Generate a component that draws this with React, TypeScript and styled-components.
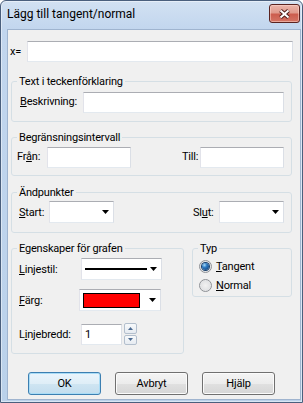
import React from "react";
import styled, { createGlobalStyle } from "styled-components";

const GlobalStyle = createGlobalStyle`
  html, body {
    margin: 0;
    padding: 0;
    background: #ffffff;
  }
  * {
    box-sizing: border-box;
  }
  body {
    font-family: Roboto, "Liberation Sans", sans-serif;
    font-size: 11px;
    letter-spacing: -0.2px;
    color: #000;
  }
`;

/* window chrome */
const Window = styled.div`
  width: 303px;
  height: 403px;
  display: flex;
  flex-direction: column;
  border: 1px solid #4a5f7d;
  border-radius: 6px 6px 0 0;
  background: linear-gradient(180deg, #d2e1f2 0px, #c2d6ee 28px, #bad1ea 100%);
  box-shadow: inset 0 0 0 1px rgba(255, 255, 255, 0.45);
  overflow: hidden;
`;

const TitleBar = styled.div`
  height: 28px;
  flex-shrink: 0;
  display: flex;
  align-items: flex-start;
  justify-content: space-between;
  padding: 0 2px 0 6px;
`;

const Caption = styled.span`
  font-size: 12px;
  letter-spacing: 0;
  line-height: 15px;
  margin-top: 6px;
  color: #000;
`;

const CloseButton = styled.div`
  width: 31px;
  height: 19px;
  margin-top: 3px;
  border: 1px solid #5a2320;
  border-radius: 3px;
  display: flex;
  align-items: center;
  justify-content: center;
  background: linear-gradient(
    180deg,
    #ebb5ab 0%,
    #e09a8c 45%,
    #cc5d4e 55%,
    #d47464 100%
  );
  box-shadow: inset 0 0 0 1px rgba(255, 220, 210, 0.5);
`;

const Client = styled.div`
  flex: 1;
  margin: 0 1px 2px 6px;
  border: 1px solid #9fb4cf;
  background: #f0f0f0;
  display: flex;
  flex-direction: column;
  padding-top: 11px;
`;

/* form parts */
const Row = styled.div<{ $mt?: number }>`
  display: flex;
  align-items: center;
  margin-top: ${(p) => p.$mt || 0}px;
`;

const XRow = styled(Row)`
  padding-left: 2px;
`;

const Label = styled.span<{ $w: number; $raise?: number }>`
  width: ${(p) => p.$w}px;
  flex-shrink: 0;
  white-space: nowrap;
  line-height: 13px;
  margin-bottom: ${(p) => (p.$raise || 0) * 2}px;
`;

const RightLabel = styled(Label)`
  margin-left: auto;
`;

const TextBox = styled.input<{ $w: number }>`
  width: ${(p) => p.$w}px;
  height: 21px;
  flex-shrink: 0;
  margin: 0;
  padding: 0 3px;
  font: inherit;
  letter-spacing: inherit;
  background: #fff;
  border: 1px solid;
  border-color: #abadb3 #dbdfe6 #e3e9ef #e2e3ea;
  border-radius: 0;
  outline: none;
`;

const Combo = styled.div<{ $w: number }>`
  width: ${(p) => p.$w}px;
  height: 22px;
  flex-shrink: 0;
  display: flex;
  align-items: center;
  padding: 0 4px 0 1px;
  background: #fff;
  border: 1px solid;
  border-color: #abadb3 #dbdfe6 #e3e9ef #e2e3ea;
`;

const ComboArrow = styled.svg`
  margin-left: auto;
  flex-shrink: 0;
`;

const LineSample = styled.div`
  margin-left: 2px;
  width: 62px;
  height: 2px;
  background: #000;
`;

const ColorSwatch = styled.div<{ $color: string }>`
  margin-left: 2px;
  width: 57px;
  height: 15px;
  border: 1px solid #000;
  background: ${(p) => p.$color};
`;

const Spinner = styled.div`
  margin-left: 2px;
  width: 13px;
  height: 22px;
  display: flex;
  flex-direction: column;
  gap: 1px;
`;

const SpinHalf = styled.div`
  flex: 1;
  display: flex;
  align-items: center;
  justify-content: center;
  border: 1px solid #b3bfcd;
  border-radius: 2px;
  background: linear-gradient(180deg, #f7f9fb 0%, #e6ebf1 100%);
`;

const Group = styled.fieldset<{ $w: number; $mt?: number }>`
  width: ${(p) => p.$w}px;
  min-width: 0;
  margin: ${(p) => p.$mt || 0}px 0 0 0;
  padding: 0;
  border: 1px solid #d5dfe5;
  border-radius: 3px;
  flex-shrink: 0;
`;

const MainGroup = styled(Group)`
  margin-left: 3px;
`;

const Legend = styled.legend`
  margin-left: 5px;
  padding: 0 2px;
  line-height: 15px;
  font-size: 11px;
`;

const GroupBody = styled.div<{ $pad: string }>`
  padding: ${(p) => p.$pad};
`;

const BottomRow = styled.div`
  display: flex;
  align-items: flex-start;
  gap: 8px;
  margin: 8px 0 0 3px;
`;

const RadioRow = styled.div<{ $mt?: number }>`
  display: flex;
  align-items: center;
  gap: 4px;
  height: 17px;
  margin-top: ${(p) => p.$mt || 0}px;
`;

const Radio = styled.span<{ $checked?: boolean }>`
  width: 13px;
  height: 13px;
  flex-shrink: 0;
  border-radius: 50%;
  border: 1px solid #8e9196;
  display: flex;
  align-items: center;
  justify-content: center;
  background: radial-gradient(circle at 50% 50%, #f2f2f2 0%, #e2e3e5 60%, #fbfbfb 100%);

  &::after {
    content: "";
    width: 7px;
    height: 7px;
    border-radius: 50%;
    display: ${(p) => (p.$checked ? "block" : "none")};
    background: radial-gradient(
      circle at 35% 30%,
      #a9dcfa 0%,
      #2f7cc4 35%,
      #0b346a 100%
    );
    box-shadow: 0 0 0 1px #173f6c;
  }
`;

const ButtonRow = styled.div`
  display: flex;
  gap: 14px;
  margin-top: 18px;
  padding-left: 20px;
`;

const Button = styled.button<{ $default?: boolean }>`
  width: 73px;
  height: 23px;
  margin: 0;
  padding: 0;
  font: inherit;
  letter-spacing: inherit;
  color: #000;
  border-radius: 3px;
  border: 1px solid ${(p) => (p.$default ? "#3c7fb1" : "#707070")};
  background: ${(p) =>
    p.$default
      ? "linear-gradient(180deg, #eaf5fc 0%, #dfeef7 50%, #cfe5f2 51%, #c3ddee 100%)"
      : "linear-gradient(180deg, #f4f4f4 0%, #ececec 50%, #e0e0e0 51%, #d6d6d6 100%)"};
  box-shadow: inset 0 0 0 1px ${(p) => (p.$default ? "#a9dcf6" : "#fbfbfb")};
`;

function Arrow() {
  return (
    <ComboArrow width="7" height="4" viewBox="0 0 7 4">
      <polygon points="0,0 7,0 3.5,4" fill="#000" />
    </ComboArrow>
  );
}

function SpinArrow({ up }: { up?: boolean }) {
  return (
    <svg width="5" height="3" viewBox="0 0 5 3">
      <polygon points={up ? "0,3 5,3 2.5,0" : "0,0 5,0 2.5,3"} fill="#4b6a91" />
    </svg>
  );
}

export default function App() {
  return (
    <>
      <GlobalStyle />
      <Window>
        <TitleBar>
          <Caption>Lägg till tangent/normal</Caption>
          <CloseButton>
            <svg width="13" height="10" viewBox="0 0 13 10">
              <path d="M2.5 1.5 L10.5 8.5 M10.5 1.5 L2.5 8.5" stroke="#4d1f1b" strokeWidth="4" />
              <path d="M2.5 1.5 L10.5 8.5 M10.5 1.5 L2.5 8.5" stroke="#ffffff" strokeWidth="2" />
            </svg>
          </CloseButton>
        </TitleBar>

        <Client>
          <XRow>
            <Label $w={17}>x=</Label>
            <TextBox $w={266} />
          </XRow>

          <MainGroup $w={281} $mt={12}>
            <Legend>Text i teckenförklaring</Legend>
            <GroupBody $pad="3px 7px 8px 8px">
              <Row>
                <Label $w={63} $raise={1}>
                  <u>B</u>eskrivning:
                </Label>
                <TextBox $w={201} />
              </Row>
            </GroupBody>
          </MainGroup>

          <MainGroup $w={281} $mt={8}>
            <Legend>Begränsningsintervall</Legend>
            <GroupBody $pad="2px 7px 7px 5px">
              <Row>
                <Label $w={30} $raise={1}>
                  Fr<u>å</u>n:
                </Label>
                <TextBox $w={84} />
                <RightLabel $w={18} $raise={1}>
                  Till:
                </RightLabel>
                <TextBox $w={84} />
              </Row>
            </GroupBody>
          </MainGroup>

          <MainGroup $w={281} $mt={9}>
            <Legend>Ändpunkter</Legend>
            <GroupBody $pad="1px 7px 9px 7px">
              <Row>
                <Label $w={30}>
                  <u>S</u>tart:
                </Label>
                <Combo $w={65}>
                  <Arrow />
                </Combo>
                <RightLabel $w={26}>
                  Sl<u>u</u>t:
                </RightLabel>
                <Combo $w={65}>
                  <Arrow />
                </Combo>
              </Row>
            </GroupBody>
          </MainGroup>

          <BottomRow>
            <Group $w={173}>
              <Legend>Egenskaper för grafen</Legend>
              <GroupBody $pad="2px 0 8px 7px">
                <Row>
                  <Label $w={62}>
                    <u>L</u>injestil:
                  </Label>
                  <Combo $w={81}>
                    <LineSample />
                    <Arrow />
                  </Combo>
                </Row>
                <Row $mt={9}>
                  <Label $w={60}>
                    <u>F</u>ärg:
                  </Label>
                  <Combo $w={82}>
                    <ColorSwatch $color="#ff0000" />
                    <Arrow />
                  </Combo>
                </Row>
                <Row $mt={12}>
                  <Label $w={62}>
                    L<u>i</u>njebredd:
                  </Label>
                  <TextBox $w={41} defaultValue="1" />
                  <Spinner>
                    <SpinHalf>
                      <SpinArrow up />
                    </SpinHalf>
                    <SpinHalf>
                      <SpinArrow />
                    </SpinHalf>
                  </Spinner>
                </Row>
              </GroupBody>
            </Group>

            <Group $w={100}>
              <Legend>Typ</Legend>
              <GroupBody $pad="2px 0 2px 6px">
                <RadioRow>
                  <Radio $checked />
                  <span>
                    <u>T</u>angent
                  </span>
                </RadioRow>
                <RadioRow $mt={2}>
                  <Radio />
                  <span>
                    <u>N</u>ormal
                  </span>
                </RadioRow>
              </GroupBody>
            </Group>
          </BottomRow>

          <ButtonRow>
            <Button $default>OK</Button>
            <Button>Avbryt</Button>
            <Button>Hjälp</Button>
          </ButtonRow>
        </Client>
      </Window>
    </>
  );
}
